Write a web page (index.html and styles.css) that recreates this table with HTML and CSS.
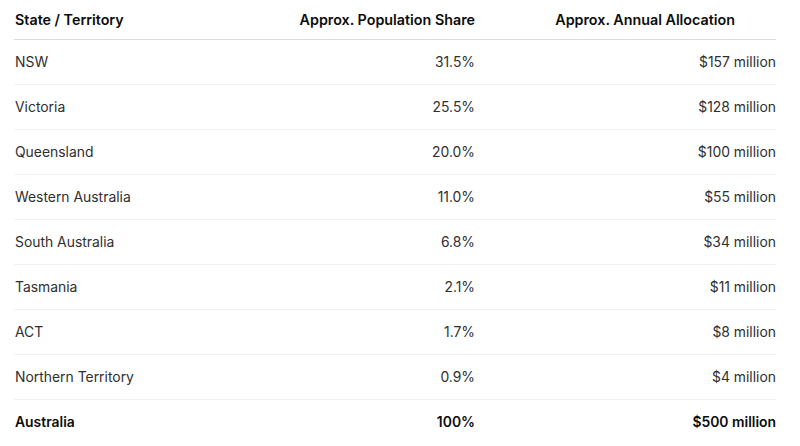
FILE: index.html
```html
<!DOCTYPE html>
<html>
<head>
<meta charset="utf-8">
<link rel="stylesheet" href="styles.css">
</head>
<body>
<table class="alloc">
  <colgroup>
    <col class="c1">
    <col class="c2">
    <col class="c3">
  </colgroup>
  <thead>
    <tr>
      <th class="left">State / Territory</th>
      <th class="right">Approx. Population Share</th>
      <th class="right last-head">Approx. Annual Allocation</th>
    </tr>
  </thead>
  <tbody>
    <tr><td class="left">NSW</td><td class="right">31.5%</td><td class="right">$157 million</td></tr>
    <tr><td class="left">Victoria</td><td class="right">25.5%</td><td class="right">$128 million</td></tr>
    <tr><td class="left">Queensland</td><td class="right">20.0%</td><td class="right">$100 million</td></tr>
    <tr><td class="left">Western Australia</td><td class="right">11.0%</td><td class="right">$55 million</td></tr>
    <tr><td class="left">South Australia</td><td class="right">6.8%</td><td class="right">$34 million</td></tr>
    <tr><td class="left">Tasmania</td><td class="right">2.1%</td><td class="right">$11 million</td></tr>
    <tr><td class="left">ACT</td><td class="right">1.7%</td><td class="right">$8 million</td></tr>
    <tr><td class="left">Northern Territory</td><td class="right">0.9%</td><td class="right">$4 million</td></tr>
    <tr class="total"><td class="left">Australia</td><td class="right">100%</td><td class="right">$500 million</td></tr>
  </tbody>
</table>
</body>
</html>
```
FILE: styles.css
```css
html, body {
  margin: 0;
  padding: 0;
  background: #ffffff;
}
body {
  padding-left: 14px;
  font-family: Inter, "Noto Sans", "Liberation Sans", sans-serif;
  font-size: 13.9px;
  color: #2f2f2f;
}
.alloc {
  width: 762px;
  border-collapse: collapse;
  table-layout: fixed;
}
.c1 { width: 236px; }
.c2 { width: 225px; }
.c3 { width: 301px; }
.alloc th {
  height: 39px;
  padding: 0;
  font-size: 14.3px;
  font-weight: 600;
  color: #0d0d0d;
  border-bottom: 1px solid #dcdcdc;
  vertical-align: middle;
}
.alloc td {
  height: 44px;
  padding: 0;
  border-bottom: 1px solid #f0f0f0;
  vertical-align: middle;
}
.alloc .left { text-align: left; padding-left: 1px; }
.alloc .right { text-align: right; }
.alloc .last-head { padding-right: 41px; }
.alloc .total td {
  font-weight: 600;
  color: #0d0d0d;
  border-bottom: none;
}
```
